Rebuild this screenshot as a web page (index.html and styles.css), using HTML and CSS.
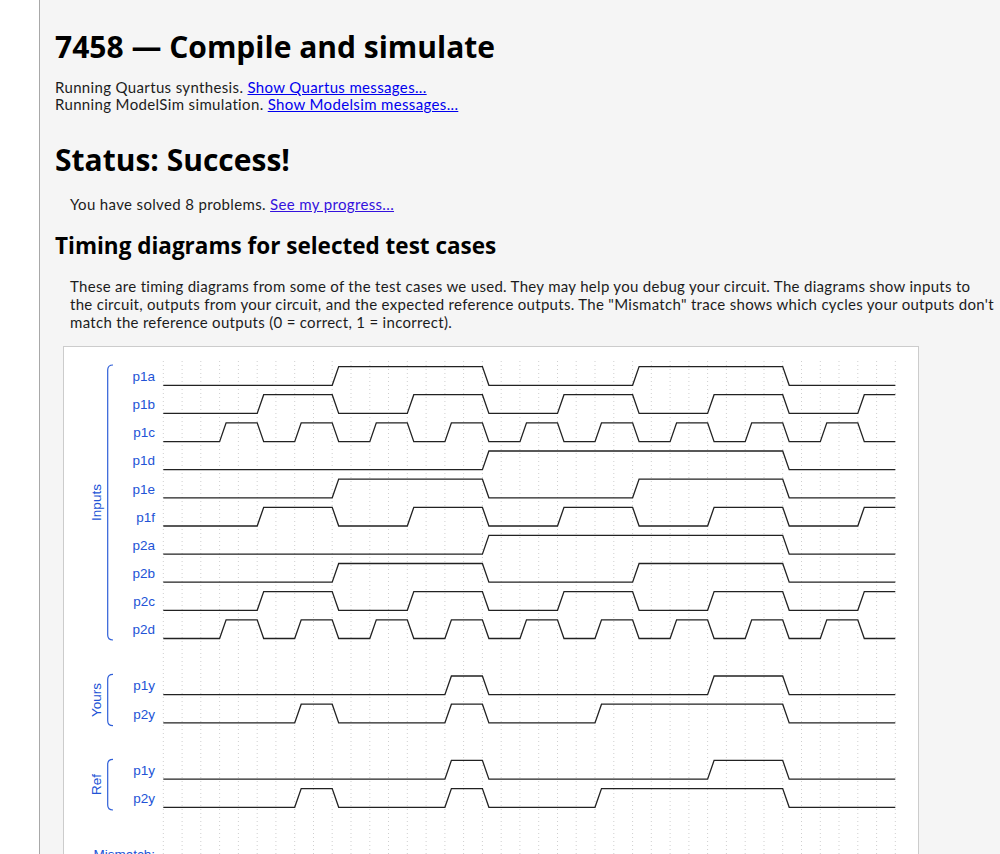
FILE: index.html
```html
<!DOCTYPE html>
<html>
<head>
<meta charset="utf-8">
<title>7458 — Compile and simulate</title>
<link rel="stylesheet" href="styles.css">
</head>
<body>
<div class="page">
  <div class="side"></div>
  <div class="main">
    <h1 class="title">7458 — Compile and simulate</h1>
    <p class="log">Running Quartus synthesis. <a href="#">Show Quartus messages...</a><br>Running ModelSim simulation. <a href="#">Show Modelsim messages...</a></p>
    <h1 class="status">Status: Success!</h1>
    <p class="solved">You have solved 8 problems. <a href="#" class="prog">See my progress...</a></p>
    <h2 class="sub">Timing diagrams for selected test cases</h2>
    <p class="desc">These are timing diagrams from some of the test cases we used. They may help you debug your circuit. The diagrams show inputs to<br>the circuit, outputs from your circuit, and the expected reference outputs. The "Mismatch" trace shows which cycles your outputs don't<br>match the reference outputs (0 = correct, 1 = incorrect).</p>
    <div class="wavebox">
      <svg class="wave" width="854" height="540" viewBox="0 0 854 540">
        <defs>
          <path id="wA" d="M99.3 0 H268.2 L274.7 -18.7 H418.4 L424.9 0 H568.6 L575.1 -18.7 H718.7 L725.2 0 H831.3"/>
          <path id="wB" d="M99.3 0 H193.2 L199.7 -18.7 H268.2 L274.7 0 H343.3 L349.8 -18.7 H418.4 L424.9 0 H493.5 L500 -18.7 H568.6 L575.1 0 H643.6 L650.1 -18.7 H718.7 L725.2 0 H793.8 L800.3 -18.7 H831.3"/>
          <path id="wC" d="M99.3 0 H155.6 L162.1 -18.7 H193.2 L199.7 0 H230.7 L237.2 -18.7 H268.2 L274.7 0 H305.8 L312.3 -18.7 H343.3 L349.8 0 H380.9 L387.4 -18.7 H418.4 L424.9 0 H456 L462.5 -18.7 H493.5 L500 0 H531 L537.5 -18.7 H568.6 L575.1 0 H606.1 L612.6 -18.7 H643.6 L650.1 0 H681.2 L687.7 -18.7 H718.7 L725.2 0 H756.3 L762.8 -18.7 H793.8 L800.3 0 H831.3"/>
          <path id="wD" d="M99.3 0 H418.4 L424.9 -18.7 H718.7 L725.2 0 H831.3"/>
          <path id="wY1" d="M99.3 0 H380.9 L387.4 -18.7 H418.4 L424.9 0 H643.6 L650.1 -18.7 H718.7 L725.2 0 H831.3"/>
          <path id="wY2" d="M99.3 0 H230.7 L237.2 -18.7 H268.2 L274.7 0 H380.9 L387.4 -18.7 H418.4 L424.9 0 H531 L537.5 -18.7 H718.7 L725.2 0 H831.3"/>
          <path id="wM" d="M99.3 0 H831.3"/>
        </defs>
        <path class="grid" d="M99.3 14V540 M118.1 14V540 M136.8 14V540 M155.6 14V540 M174.4 14V540 M193.2 14V540 M211.9 14V540 M230.7 14V540 M249.5 14V540 M268.2 14V540 M287 14V540 M305.8 14V540 M324.5 14V540 M343.3 14V540 M362.1 14V540 M380.9 14V540 M399.6 14V540 M418.4 14V540 M437.2 14V540 M455.9 14V540 M474.7 14V540 M493.5 14V540 M512.2 14V540 M531 14V540 M549.8 14V540 M568.6 14V540 M587.3 14V540 M606.1 14V540 M624.9 14V540 M643.6 14V540 M662.4 14V540 M681.2 14V540 M700 14V540 M718.7 14V540 M737.5 14V540 M756.3 14V540 M775 14V540 M793.8 14V540 M812.6 14V540 M831.3 14V540"/>
        <g class="sig">
          <use href="#wA" y="38.3"/>
          <use href="#wB" y="66.4"/>
          <use href="#wC" y="94.6"/>
          <use href="#wD" y="122.7"/>
          <use href="#wA" y="150.8"/>
          <use href="#wB" y="179"/>
          <use href="#wD" y="207.1"/>
          <use href="#wA" y="235.2"/>
          <use href="#wB" y="263.3"/>
          <use href="#wC" y="291.5"/>
          <use href="#wY1" y="347.7"/>
          <use href="#wY2" y="375.9"/>
          <use href="#wY1" y="432.1"/>
          <use href="#wY2" y="460.3"/>
          <use href="#wM" y="516.5"/>
        </g>
        <g class="lbl">
          <text x="91" y="34">p1a</text>
          <text x="91" y="62.1">p1b</text>
          <text x="91" y="90.3">p1c</text>
          <text x="91" y="118.4">p1d</text>
          <text x="91" y="146.5">p1e</text>
          <text x="91" y="174.7">p1f</text>
          <text x="91" y="202.8">p2a</text>
          <text x="91" y="230.9">p2b</text>
          <text x="91" y="259">p2c</text>
          <text x="91" y="287.2">p2d</text>
          <text x="91" y="343.4">p1y</text>
          <text x="91" y="371.6">p2y</text>
          <text x="91" y="427.8">p1y</text>
          <text x="91" y="456">p2y</text>
          <text x="91" y="512.2">Mismatch:</text>
        </g>
        <g class="brk">
          <path d="M49 18 Q43.7 18 43.7 23 V288 Q43.7 293 49 293"/>
          <path d="M49 327.3 Q43.7 327.3 43.7 332.3 V373.7 Q43.7 378.7 49 378.7"/>
          <path d="M49 412.3 Q43.7 412.3 43.7 417.3 V458 Q43.7 463 49 463"/>
        </g>
        <g class="grp">
          <text transform="translate(37 155.5) rotate(-90)">Inputs</text>
          <text transform="translate(37 353) rotate(-90)">Yours</text>
          <text transform="translate(37 437.5) rotate(-90)">Ref</text>
        </g>
      </svg>
    </div>
  </div>
</div>
</body>
</html>
```

FILE: styles.css
```css
html, body {
  margin: 0;
  padding: 0;
  background: #f5f5f5;
}
body {
  font-family: "Lato", "Noto Sans", sans-serif;
  color: #1c1c1c;
}
.page {
  display: flex;
  min-height: 100vh;
}
.side {
  width: 39px;
  flex: none;
  background: #ffffff;
  border-right: 1px solid #a8a8a8;
}
.main {
  flex: 1;
  background: #f5f5f5;
  padding: 1px 0 40px 15px;
  min-width: 0;
}
.title, .status {
  font-family: "Open Sans", sans-serif;
  font-weight: 700;
  font-size: 30px;
  line-height: 36px;
  margin: 28px 0 0 0;
  color: #000;
}
.log, .solved, .desc {
  font-size: 15px;
  letter-spacing: 0.35px;
}
.log {
  line-height: 17px;
  margin: 14px 0 0 0;
}
.status {
  margin-top: 29px;
}
.solved {
  line-height: 17px;
  margin: 18px 0 0 15px;
}
.sub {
  font-family: "Open Sans", sans-serif;
  font-weight: 700;
  font-size: 22.5px;
  line-height: 30px;
  margin: 18px 0 0 0;
  color: #000;
}
.desc {
  line-height: 18px;
  margin: 16px 0 0 15px;
  white-space: nowrap;
  letter-spacing: 0.3px;
}
a {
  color: #0000ee;
}
a.prog {
  color: #3311dd;
}
.wavebox {
  margin: 15px 0 0 8px;
  width: 854px;
  background: #ffffff;
  border: 1px solid #cccccc;
}
.wave {
  display: block;
}
.grid {
  stroke: #cfcfcf;
  stroke-width: 1;
  stroke-dasharray: 1 3;
  fill: none;
}
.sig use {
  stroke: #222222;
  stroke-width: 1.3;
  fill: none;
}
.lbl text {
  font-family: "Liberation Sans", Arial, sans-serif;
  font-size: 13.5px;
  fill: #2253d6;
  text-anchor: end;
}
.grp text {
  font-family: "Liberation Sans", Arial, sans-serif;
  font-size: 13.5px;
  fill: #2253d6;
  text-anchor: middle;
}
.brk path {
  stroke: #2f5fd8;
  stroke-width: 1.2;
  fill: none;
}
```
